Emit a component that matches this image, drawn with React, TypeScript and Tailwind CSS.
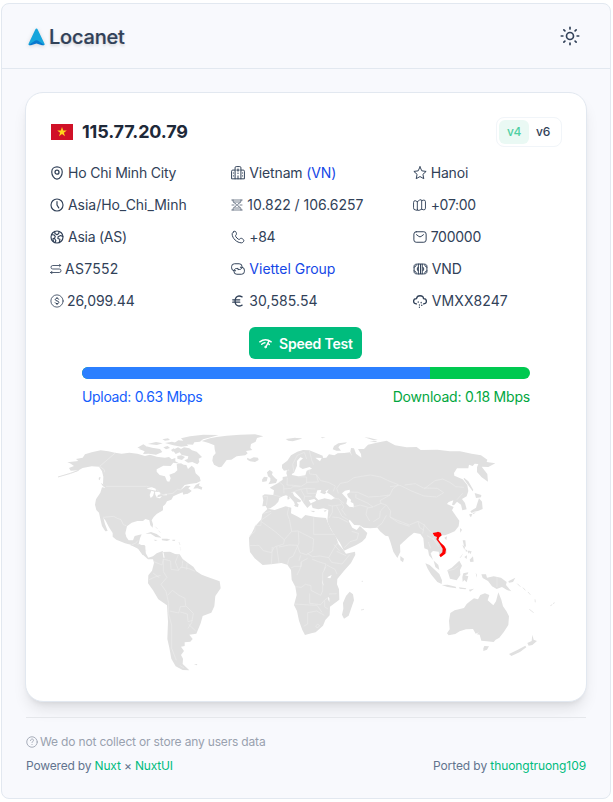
import type { ReactNode } from "react";

function Glyph({ children, className = "" }: { children: ReactNode; className?: string }) {
  return (
    <svg viewBox="0 0 24 24" fill="none" stroke="currentColor" strokeWidth="1.7" strokeLinecap="round" strokeLinejoin="round" className={"shrink-0 " + className}>
      {children}
    </svg>
  );
}

function Item({ icon, box, children, tracking = "" }: { icon: ReactNode; box: string; children: ReactNode; tracking?: string }) {
  return (
    <div className={"flex h-5 items-center whitespace-nowrap " + tracking}>
      <span className={"flex shrink-0 items-center " + box}>{icon}</span>
      <span>{children}</span>
    </div>
  );
}

function WorldMap() {
  return (
    <svg viewBox="50 425 510 255" className="block h-[255px] w-[510px]" fill="#e0e0e0" strokeLinejoin="round">
      <g transform="translate(50 425) scale(.33333)">
        <path d="M25 155 60 144 85 136 62 137 57 129 72 123 60 115 52 112 85 108 78 102 98 98 105 88 125 82 152 76 175 79 195 83 215 86 238 83 262 86 285 93 300 89 320 95 345 98 357 96 365 103 376 99 376 109 390 116 370 113 362 123 340 122 320 133 320 140 329 150 345 154 351 169 358 170 362 160 358 149 374 143 382 136 380 118 393 115 401 119 409 120 414 132 425 122 433 129 437 145 449 156 452 168 440 174 418 177 404 180 391 196 408 182 422 183 415 190 425 198 417 204 400 209 398 202 383 208 370 214 364 224 351 229 346 238 339 244 339 256 320 267 311 276 305 286 309 298 308 308 301 301 298 286 286 282 279 288 262 288 245 293 231 304 226 325 229 336 236 346 249 346 254 333 275 328 270 340 266 356 276 361 286 363 286 390 278 390 265 372 245 360 225 355 199 344 188 335 188 324 177 307 167 287 160 278 165 297 173 318 166 319 156 303 151 282 147 263 139 255 135 239 138 223 151 203 156 187 166 188 159 176 160 155 156 139 147 125 125 124 98 129 82 138Z" />
        <path d="M267 72 286 63 306 68 330 72 337 81 318 89 296 86 279 87 284 79Z M262 68 280 58 289 64 275 72Z M293 57 318 51 338 55 321 60Z M337 43 354 40 360 45 345 47Z M340 67 353 63 360 69 348 73Z M345 54 366 50 381 54 408 56 415 62 394 65 370 61Z M374 53 385 46 400 47 393 40 420 34 460 29 506 30 482 37 459 43 450 50 433 52 429 59 399 57Z M368 75 384 67 393 72 402 67 418 70 426 76 440 80 456 96 446 101 448 111 442 118 427 111 414 113 403 106 413 102 415 94 395 90 389 82 377 87Z M382 93 394 91 405 96 396 105 382 101Z M363 75 371 70 378 75 368 80Z M437 180 449 174 447 182 457 187 455 194 442 190 430 191Z M409 199 424 197 413 206 402 207Z M152 174 166 181 169 189 159 184Z M147 157 152 157 149 166 146 163Z M286 326 303 321 320 327 335 338 317 336 302 326Z M335 341 352 341 361 344 351 348 336 346Z M311 344 323 345 316 348Z M367 344 376 344 374 348 367 347Z M322 388 338 381 360 380 382 390Z" />
        <path d="M24 156 62 145 86 136" fill="none" stroke="#e0e0e0" strokeWidth="3" />
        <path d="M316 305 323 312 M326 317 331 323 M387 351 390 360 M391 366 392 376" fill="none" stroke="#e7e7e7" strokeWidth="2" />
        <path d="M290 191 304 186 317 191 318 197 304 194Z M304 197 313 200 309 213 302 219 299 210Z M315 200 329 201 332 208 324 210 321 218 316 209Z M319 218 336 213 330 220Z M337 211 350 207 351 211Z" fill="#fff" />
        <path d="M197 83 149 124 164 135 163 142M168 184H290L306 189M320 193 336 209 353 207 369 205 382 193 393 195M159 277 191 274 202 280 213 284 220 299 229 302M246 359 258 354 264 346M266 356 259 367M276 361 272 373M283 377 289 376" fill="none" stroke="#eeeeee" strokeWidth="1.8" />
      </g>
      <g transform="translate(220 425) scale(.33333)">
        <path d="M-55 48-30 40-10 36 20 32 60 29 105 28 130 34 111 39 107 50 93 57 91 69 97 75 78 78 83 85 76 91 50 94 34 104 20 105 5 125-3 127-18 119-23 107-21 94-13 85-16 73-17 61-36 53Z" />
        <path d="M81 98 90 102 101 97 114 98 116 105 105 111 90 109 82 104Z M197 42 225 38 245 41 232 45 218 49 205 47Z M230 39 247 40 239 43Z M302 37 317 37 307 40Z M338 73 342 63 355 55 381 52 376 56 360 61 355 67 363 77 349 77Z M433 37 448 38 474 45 460 46Z M448 49 472 48 466 52Z M141 142 149 135 158 141 156 149 166 160 172 164 168 174 154 176 145 178 151 167 151 159 144 154Z M126 164 132 155 143 157 140 169 127 171Z M202 215 207 211 209 221 203 224Z M222 240 236 237 234 247 224 243Z M271 257 286 258 280 262Z M311 257 321 254 315 261Z" />
        <path d="M127 212 134 208 160 210 162 196 149 188 158 183 173 175 188 164 188 156 202 154 199 145 201 135 213 136 216 150 235 154 256 151 260 137 276 131 269 126 248 132 238 126 239 109 249 100 241 97 231 108 231 122 222 143 214 148 207 134 192 137 186 129 186 119 202 107 213 91 232 80 249 75 268 76 290 85 308 92 309 99 286 98 300 109 305 99 319 98 327 88 343 91 353 85 373 84 390 82 397 94 391 80 393 69 402 70 408 86 424 98 423 87 414 72 432 72 444 59 469 53 500 47 525 61 560 67 590 66 602 75 652 74 690 79 720 79 755 86 783 91 802 104 800 111 826 115 805 126 785 125 802 147 804 170 785 157 771 141 771 127 775 117 764 116 758 123 747 119 745 130 711 130 702 144 703 152 728 163 742 180 745 198 740 214 726 222 735 234 740 253 727 256 723 239 711 230 702 241 696 239 700 226 686 231 681 237 701 246 696 256 710 276 718 287 716 304 704 319 687 326 675 331 667 331 655 339 660 352 679 370 680 383 660 396 656 380 639 378 632 385 639 405 655 420 658 435 646 426 641 407 627 391 624 374 613 370 610 340 601 327 582 323 566 336 540 360 541 381 532 399 520 380 511 350 505 334 496 332 480 319 472 308 450 310 431 308 419 301 403 300 389 284 386 288 397 308 410 315 420 303 442 324 437 339 426 350 409 360 372 377 360 354 338 322 325 297 322 286 325 254 310 250 295 253 278 249 273 235 289 227 283 222 266 226 274 238 262 249 251 235 241 219 225 202 217 201 223 213 244 227 240 232 231 231 235 240 227 245 222 231 208 215 198 211 188 214 178 219 175 230 165 241 151 250 142 252 137 243 127 244 130 226Z" />
        <path d="M143 251 164 255 197 244 214 248 213 265 231 274 244 281 256 270 286 276 318 279 324 294 333 314 348 335 356 358 370 374 378 386 405 380 406 389 393 414 371 439 352 462 351 478 357 493 358 524 330 545 329 571 316 585 309 602 287 622 274 625 255 630 247 615 237 587 231 558 222 540 230 510 226 485 215 464 213 435 202 419 184 414 153 418 128 420 104 400 90 381 88 362 87 338 96 323 106 303 124 283 127 267Z" />
        <path d="M289 205 292 196 304 195 301 203 314 208 320 202 334 211 345 219 334 224 314 220 295 225 286 216Z M366 205 375 197 389 194 390 202 381 207 384 216 393 224 392 231 400 235 402 247 388 245 379 236 382 223Z M316 199 326 193 320 203Z M323 456 335 450 331 460 323 458Z M324 515 328 520 328 531 325 524Z M307 463 311 483 307 475Z" fill="#fff" />
        <path d="M378 513 389 500 399 508 402 526 386 572 372 581 366 569 370 551 369 534Z M541 393 552 401 549 412 541 406Z" />
        <path d="M732 158 745 169 760 195 758 199 742 177 731 162Z M764 204 784 210 783 217 768 219Z M777 220 786 230 788 252 774 258 762 260 755 264 751 259 768 248 772 235Z M748 267 757 267 753 277 749 272Z M757 264 768 262 761 267Z M720 309 726 314 721 323Z M673 338 681 334 679 346Z M728 346 736 346 738 365 732 364Z M736 372 742 377 738 381Z M746 378 755 379 751 388Z" />
        <g fill="none" stroke="#ececec" strokeWidth="1.8">
          <path d="M131 215 143 215 139 241M160 210 182 215M178 171 191 182 192 205M202 158 201 180 221 181 244 184 260 174 260 156 233 155M190 192 214 190 218 185 240 185M213 203 242 193 260 190 286 192M244 196 254 214 275 214M254 214 251 229M260 190 262 205 290 205M260 172 295 171 289 149 269 147 267 133 M222 142 218 118 232 91 253 82 260 102M268 77 276 108 281 119M289 149 302 167 325 172 346 183 340 199M340 219 356 222 372 235M355 205 350 190 361 175 383 171 402 158 425 154 451 150 482 156 507 168 535 179 518 192 510 210 479 214 445 216 413 202 389 201M408 207 407 218 444 235 459 246 442 249 438 269 449 288M399 246 420 240 444 247M460 245 483 235 499 240 481 258 479 278 460 290M483 235 480 227 510 210M499 240 512 258 510 276 535 293 569 304M469 308 486 295 499 271M510 276 525 283 568 300 594 289 613 300 608 326M510 185 540 181 577 199 612 213 650 216 671 203 652 190 610 189 586 176 554 180M612 192 645 167 668 162 691 173 707 185 732 187M728 205 711 224M594 290 599 307 611 316M611 297 622 311 642 330M621 332 643 344 656 359M325 240 335 243 345 242 363 239M337 243 337 262 327 279M350 244 366 274 385 285M337 276 357 278 384 292M361 230 372 246 365 254 378 272M373 368 390 350 411 344 416 324M415 325 395 319M650 331 639 340 656 365M625 351 632 370" />
          <path d="M130 265 153 259M105 301H123V286L154 264M105 303V319L88 333M123 289 167 321 193 344 215 319 208 283 202 268 206 247M281 277V328H344M215 319 234 318 281 342M193 344 191 357 163 366 154 383 130 377 117 361 90 362M170 366 177 414M157 366 154 418M177 366 207 360 232 361M235 320 237 354 219 394 208 399 202 419M232 361 240 383 259 389 278 378 281 342M263 386 278 395 300 393 326 398 342 370 354 352M237 407 242 391M214 428 224 424 245 424 243 411 263 400M277 403 295 410 318 417 312 436M326 398 335 412 366 417 389 389M320 420 345 433 351 447M226 485 244 487 256 478 273 482 273 496 302 511 308 498 308 444 318 425M231 450 240 432 244 412M269 505 269 535 302 539 314 525 324 518M222 537 269 540 291 541 306 562M251 604 263 597 263 563 290 558 313 571M314 526 314 546 324 552M327 507 350 506M287 603 294 597 299 603 291 609 287 603M342 359 360 379M350 379 378 392" />
        </g>
        <path d="M638 324 650 322 654 320 662 323 665 331 658 337 655 344 663 354 673 363 678 373 676 386 662 397 658 390 667 382 668 371 659 356 649 343 651 336 643 333Z" fill="red" />
      </g>
      <g transform="translate(130 545) scale(.33333)">
        <path d="M0 0 44 0 47 24 55 38 69 34 80 25 98 18 101 26 119 27 149 28 158 42 174 54 190 65 199 79 215 89 239 98 269 109 272 130 256 153 253 184 244 203 218 213 212 235 199 266 178 269 188 282 181 290 164 292 164 303 153 305 162 318 153 330 159 341 158 357 178 376 158 375 137 364 124 341 118 308 112 282 114 230 111 181 85 163 69 136 54 115 55 91 66 77 72 54 69 43 54 43 37 28 24 10Z M192 358 202 357 200 361Z" />
        <path d="M99 21 102 38 100 25 M151 5 152 15 M180 377 188 374" fill="none" stroke="#fff" strokeWidth="2" />
        <path d="M72 50 96 60 100 42 122 48 123 73 146 76 153 66 180 72 195 79M100 42V80L111 97 93 118 108 139 116 175 115 205 125 240 125 310 139 346M57 104 75 96 92 91M69 84 88 98M113 151 127 136 147 151 165 160 167 182 190 205 185 233 174 250M119 198 146 204 151 185 167 184M151 201 172 207 174 230 188 226M176 238 197 258M145 30 136 51 146 76M158 47 156 69M171 54 170 74M149 361 162 369" fill="none" stroke="#ececec" strokeWidth="1.8" />
      </g>
      <g transform="translate(350 545) scale(.33333)">
        <path d="M301 204 314 196 342 189 350 177 360 169 372 160 384 163 391 150 405 145 418 150 413 166 430 181 438 169 445 142 454 164 459 184 469 198 477 214 475 240 462 260 448 278 437 284 431 291 410 289 394 287 389 269 380 268 387 262 377 266 369 252 348 253 329 259 316 267 296 271 291 265 299 253 297 227Z M403 303 417 304 411 314 400 318 400 310Z M547 269 551 284 561 288 547 300 536 302 532 294 545 288Z M526 302 529 307 510 321 484 333 477 327 502 315Z" />
        <path d="M226 55 239 60 268 87 276 106 275 117 262 111 244 89 233 71Z M275 120 293 119 317 125 319 130 293 126Z M292 76 305 68 328 47 336 62 330 75 331 90 320 106 300 101Z M340 85 355 82 353 88 345 91 355 94 350 112 343 105 338 111 337 96Z M394 88 408 88 411 98 431 94 453 98 470 111 468 120 484 139 471 135 456 126 440 132 426 124 414 108 398 99Z M359 44 369 34 371 50 361 51Z M343 36 351 31 350 42Z M328 40 340 25 333 37Z M475 109 496 98 489 111 477 113Z M327 127 349 130 347 133 329 131Z M357 134 372 131 360 140Z M377 83 381 90 380 98Z M337 0 345 5 343 14Z M352 17 360 17 356 26Z" />
        <path d="M502 116 511 125 M519 128 526 136 M534 141 541 149 M538 193 551 203 M601 182 607 179 M609 176 614 173 M555 163 556 172 M33 195 42 193 M35 109 39 109" fill="none" stroke="#e2e2e2" strokeWidth="2.5" />
        <path d="M292 78 312 73 325 63M441 96 441 126" fill="none" stroke="#ececec" strokeWidth="1.8" />
      </g>
    </svg>
  );
}

const pin = <Glyph className="size-[14px]"><path d="M3 10.2C3 5 7 1.5 12 1.5s9 3.5 9 8.7c0 5-3.5 12.3-9 12.3S3 15.2 3 10.2Z" strokeWidth="2" /><circle cx="12" cy="10.5" r="3.4" strokeWidth="2.2" /></Glyph>;
const clock = <Glyph className="size-[14px]"><circle cx="12" cy="12" r="10.3" strokeWidth="2" /><path d="M12 6v6l3 5" strokeWidth="2" /></Glyph>;
const globe = <Glyph className="size-[14px]"><circle cx="12" cy="12" r="10.3" strokeWidth="2" /><path d="M2.500 8 7 8.500l2 2.500-1 3-3 1 1 5M8 2.500l.5 3.500L12 8l3-2 .5-3.500M22 11l-4-1.500-4 2-.5 3L17 16l-1 5M9 21l1-3-2-3" strokeWidth="2" /></Glyph>;
const route = <Glyph className="h-[14px] w-[12px]"><path d="M21 5H5.500a3.500 3.500 0 0 0 0 7h13a3.500 3.500 0 0 1 0 7H1M19 2.500 21.500 5 19 7.500M4 16.500 1.500 19 4 21.500" /></Glyph>;
const dollar = <Glyph className="size-[14px]"><circle cx="12" cy="12" r="10.5" strokeWidth="1.4" /><path d="M15.2 9C14.500 7 9 6.800 9 9.600s6.200 1.700 6.200 4.700-5.700 3-6.500.7M12 6v1m0 10v1" /></Glyph>;
const building = <Glyph className="size-[14px]"><path d="M7 22V3q0-2 2-2h6q2 0 2 2v19M7 7H3Q1 7 1 9v13h22V9q0-2-2-2h-4M12 22v-5M12 5v4m-2-2h4m-2 5v1M4 12h.5m-.5 5h.5m15-5h.5m-.5 5h.5" /></Glyph>;
const hourglass = <Glyph className="size-[12px]"><path d="M1.500 2h21M1.500 22h21M4 2v2c0 5 7 4 7 8s-7 3-7 8v2M20 2v2c0 5-7 4-7 8s7 3 7 8v2M6 6h12M2 12h4m12 0h4M7 18h10" strokeWidth="1.3" /></Glyph>;
const phone = <Glyph className="size-[14px]"><path d="M4 3.500 6.500 2c2 0 3 4 3 5s-2.500 2-1.500 4 3 4 5 5 3-2 4-2 5 2 5 4-2 4-4 4C10 22 2 14 2 7c0-1.500.5-2.500 2-3.500Z" /></Glyph>;
const link = <Glyph className="size-[14px]"><path d="M8 15H6a5 5 0 0 1-5-5V8a5 5 0 0 1 5-5h8a5 5 0 0 1 5 5c0 5-4 5-7 5M16 9h2a5 5 0 0 1 5 5v2a5 5 0 0 1-5 5h-8a5 5 0 0 1-5-5c0-5 4-5 7-5" /></Glyph>;
const euro = <Glyph className="size-[14px]"><path d="M19 5C13 1.500 7 4 7 12s6 10.500 12 7M3 10h12M3 14h12" strokeWidth="2.200" /></Glyph>;
const star = <Glyph className="size-[14px]"><path d="m12 1.500 3.100 6.800 7.400 1-5.500 5 1.500 7.500-6.500-3.700-6.500 3.700L7 14.300l-5.500-5 7.400-1L12 1.500Z" /></Glyph>;
const map = <Glyph className="size-[13px]"><path d="M1 6q0-3 3-3l4 2v16l-4-1q-3 0-3-3ZM8 5l4-3q4-2 4 1v16l-5 2q-3 1-3-2M16 3l4-1q3 0 3 3v12q0 3-3 3l-4-1" /></Glyph>;
const mail = <Glyph className="size-[14px]"><rect x="1.500" y="3" width="21" height="18" rx="4" /><path d="m6 8 4 3q2 1.500 4 0l4-3" /></Glyph>;
const banknote = <Glyph className="h-[14px] w-[15px]"><path d="M9 3.500h6v17H9zM9 3.500C3 3.500 1 4 1 8v8c0 4 2 4.500 8 4.500M15 3.500c6 0 8 .5 8 4.500v8c0 4-2 4.500-8 4.500M12 4v16M7.500 9q-3 3 0 6M16.500 9q3 3 0 6M1 9q3 0 4-4M1 15q3 0 4 4M23 9q-3 0-4-4M23 15q-3 0-4 4" /></Glyph>;
const cloud = <Glyph className="size-[14px]"><path d="M6 17C2.500 17 1 15 1 12.500S3 8 6 8c.5-3 3-5 6-5s6 2 6 5c3 0 5 2 5 4.500S21 17 18 17M9 13.500v.5m5 .5v.5m-3 3.500v.5m4 0v.5m-4 3v.2" strokeWidth="2.200" /></Glyph>;

export default function App() {
  return (
    <div className="h-[802px] bg-white pt-[3px] pl-px font-['Inter',sans-serif] text-slate-700">
      <div className="h-[796px] w-[610px] rounded-lg border border-slate-200 bg-[#f8f9fd]">
        <header className="flex h-[65px] items-center justify-between border-b border-slate-200 pr-[30px] pl-[26px]">
          <div className="flex items-center pt-px">
            <svg viewBox="0 0 17 18" className="h-[18px] w-[17px] drop-shadow-sm">
              <path d="M8.500.5q.8 0 1.200 1l6.700 14q.8 2-1 1.800L8.500 13l-6.800 4.300q-1.800.2-1-1.800l6.600-14q.4-1 1.200-1Z" fill="#16a5dc" />
              <path d="m1 16.800 6.300-4.300q1.200-.6 2.400 0l6.300 4.300q-1 .8-2 .4l-5.500-1.800L3 17.200q-1 .4-2-.4Z" fill="#0878cf" />
            </svg>
            <span className="ml-[4px] pt-px text-[20px] leading-7 font-medium tracking-[-0.2px] [text-shadow:0_2px_3px_rgb(0_0_0/0.15)] [-webkit-text-stroke:0.2px_currentColor]">Locanet</span>
          </div>
          <Glyph className="size-5"><circle cx="12" cy="12" r="4.200" strokeWidth="2" /><path d="M12 1.500v2m0 17v2M1.500 12h2m17 0h2M4.600 4.600l1.300 1.300m12.200 12.200 1.300 1.300M4.600 19.400l1.300-1.300M18.100 5.900l1.300-1.300" strokeWidth="2" /></Glyph>
        </header>

        <main className="px-[23px] pt-[23px]">
          <section className="h-[610px] rounded-[18px] border border-slate-200 bg-white px-6 pt-6 shadow-lg">
            <div className="flex h-[30px] items-center justify-between">
              <div className="flex items-center pl-px">
                <svg viewBox="0 0 22 16" className="h-4 w-[22px]"><path d="M0 0h22v16H0z" fill="#d01127" /><path d="m11 3 1.200 3.500h3.600L12.900 8.700l1.100 3.500-3-2.100-3 2.100 1.100-3.500-2.900-2.200h3.600Z" fill="#ffd51d" /></svg>
                <h1 className="ml-[9px] text-[18px] leading-7 font-bold tracking-[-0.15px] text-gray-800">115.77.20.79</h1>
              </div>
              <div className="flex h-[30px] w-[66px] items-center rounded-lg border border-slate-100 px-[2px] text-[12px] font-medium">
                <span className="flex h-6 w-[30px] items-center justify-center rounded-md bg-[#eaf9f4] tracking-[-0.3px] text-[#4fcfa2]">v4</span>
                <span className="ml-[7px] tracking-[-0.1px]">v6</span>
              </div>
            </div>

            <div className="mt-4 grid grid-cols-3 gap-x-8 gap-y-3 text-[14px] leading-5">
              <Item icon={pin} box="w-[18px]" tracking="tracking-[-0.2px]">Ho Chi Minh City</Item>
              <Item icon={building} box="w-[18px]" tracking="tracking-[-0.15px]">Vietnam <span className="text-blue-700">(VN)</span></Item>
              <Item icon={star} box="w-[18px]" tracking="tracking-[-0.15px]">Hanoi</Item>
              <Item icon={clock} box="w-[18px]" tracking="tracking-[-0.04px]">Asia/Ho_Chi_Minh</Item>
              <Item icon={hourglass} box="w-[16px]" tracking="tracking-[-0.04px]">10.822 / 106.6257</Item>
              <Item icon={map} box="w-[18px]" tracking="tracking-[-0.3px]">+07:00</Item>
              <Item icon={globe} box="w-[18px]" tracking="tracking-[-0.25px]">Asia (AS)</Item>
              <Item icon={phone} box="w-[18px]" tracking="tracking-[-0.4px]">+84</Item>
              <Item icon={mail} box="w-[18px]" tracking="tracking-[-0.25px]">700000</Item>
              <Item icon={route} box="w-[15px]" tracking="tracking-[0.25px]">AS7552</Item>
              <Item icon={link} box="w-[18px]"><span className="text-blue-700">Viettel Group</span></Item>
              <Item icon={banknote} box="w-[19px]" tracking="tracking-[-0.1px]">VND</Item>
              <Item icon={dollar} box="w-[17px]" tracking="tracking-[-0.08px]">26,099.44</Item>
              <Item icon={euro} box="w-[18px]" tracking="tracking-[0.08px]">30,585.54</Item>
              <Item icon={cloud} box="w-[19px]" tracking="tracking-[0.15px]">VMXX8247</Item>
            </div>

            <button className="mt-4 ml-[199px] flex h-8 w-[113px] items-center rounded-md bg-[#00bc7d] pl-[10px] text-[14px] font-semibold tracking-[-0.2px] whitespace-nowrap text-white">
              <Glyph className="mr-[7px] size-[13px]"><path d="M1.500 9q10.500-8 21 0M5 13.500q3-3 6-3M18 8l-5 10M17 12l2 2" strokeWidth="2.600" /><circle cx="12" cy="18.500" r="1.500" fill="currentColor" /></Glyph>
              Speed Test
            </button>
            <div className="mx-auto mt-2 w-[448px]">
              <div className="flex h-3 overflow-hidden rounded-md bg-[#00c950]"><div className="w-[348px] bg-[#2b7fff]" /></div>
              <div className="mt-2 flex justify-between text-[14px] leading-5">
                <span className="tracking-[-0.33px] text-blue-600">Upload: 0.63 Mbps</span>
                <span className="tracking-[-0.2px] text-green-600">Download: 0.18 Mbps</span>
              </div>
            </div>
            <div className="mt-[18px]"><WorldMap /></div>
          </section>

          <footer className="mx-px mt-[15px] border-t border-gray-200 pt-4 text-[12px] leading-4 text-slate-500">
            <div className="flex items-center tracking-[-0.17px] text-gray-400">
              <Glyph className="mr-[2px] size-3"><circle cx="12" cy="12" r="10.500" /><path d="M9 9c0-4 6-4 6-.5C15 11 12 11 12 13m0 4v.2" /></Glyph>
              We do not collect or store any users data
            </div>
            <div className="mt-2 flex justify-between tracking-[-0.17px]">
              <span>Powered by <span className="text-[#00bc7d]">Nuxt</span> × <span className="text-[#00bc7d]">NuxtUI</span></span>
              <span className="tracking-[-0.08px]">Ported by <span className="text-[#00bc7d]">thuongtruong109</span></span>
            </div>
          </footer>
        </main>
      </div>
    </div>
  );
}
